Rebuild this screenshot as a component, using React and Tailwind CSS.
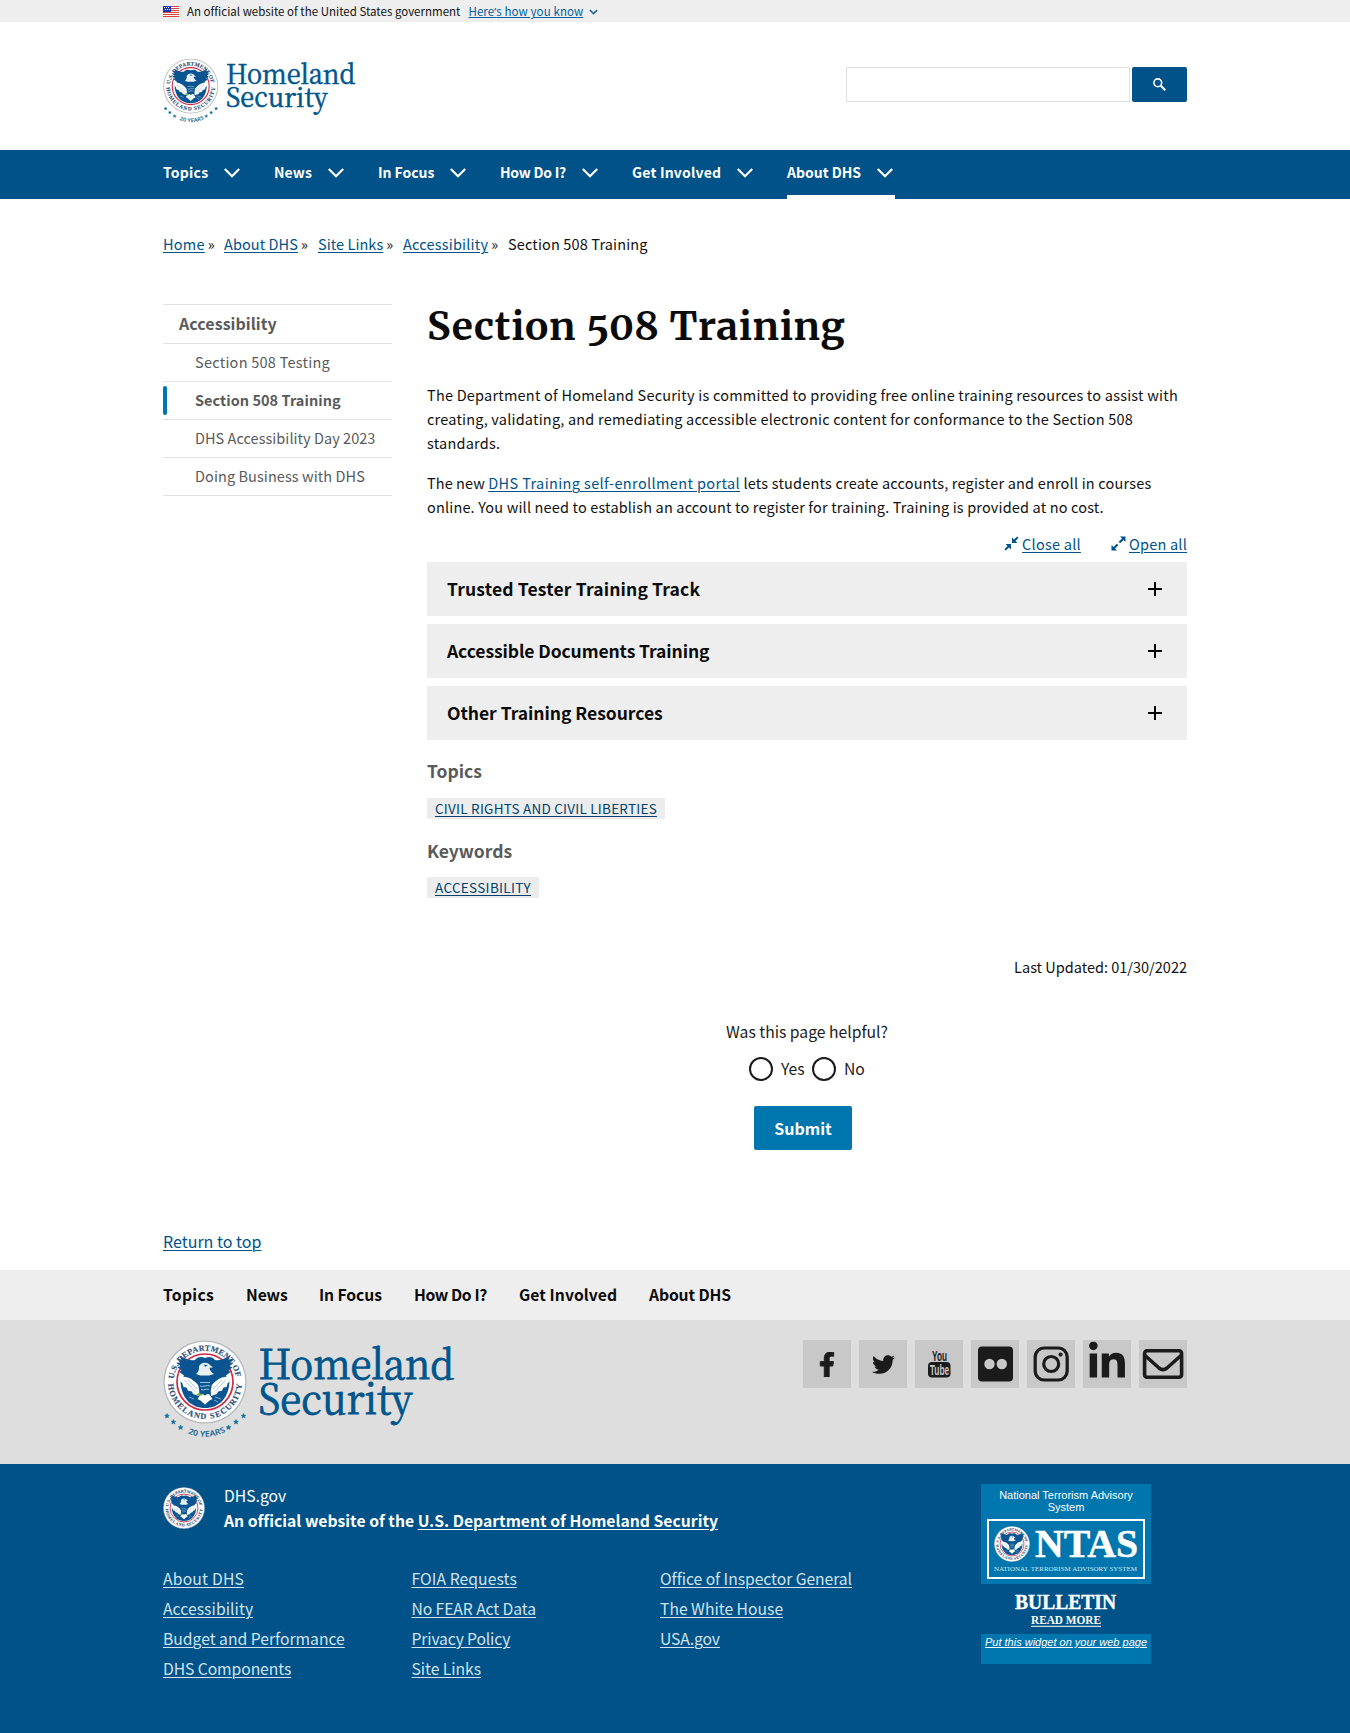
import React, { useId } from "react";
import { FaFacebookF, FaTwitter, FaLinkedinIn } from "react-icons/fa";

const link = "text-[#005288] underline decoration-1 underline-offset-2";

function SealArt() {
  const id = useId().replace(/[^a-zA-Z0-9]/g, "");
  return (
    <g>
      <defs>
        <path id={`${id}t`} d="M10.8 42A31.2 31.2 0 0 1 73.2 42" />
        <path id={`${id}b`} d="M5 42A37 37 0 0 0 79 42" />
      </defs>
      <circle cx="42" cy="42" r="41.600" fill="#b4b8be" />
      <circle cx="42" cy="42" r="40.300" fill="#fff" />
      <circle cx="42" cy="42" r="28" fill="#fff" stroke="#cf2a45" strokeWidth="1.700" />
      {/* field */}
      <path d="M17.500 39.500C17.500 58 28 68 42 68s24.500-10 24.500-28.500L58 30H26z" fill="#0a5591" />
      {/* upper wings */}
      <path d="M42 18c-4-1.800-8-1-10 2-4 1-9-1-15.500-4.500l2 4-4.500-.8 3.300 3.800-4.300.2 4.500 3.300-3 1.500 4 2.500-2 2L21 35.500l5 5 8 3h16l8-3 5-5 4.500-3.500-2-2 4-2.500-3-1.500 4.500-3.300-4.300-.2L70 18.700l-4.500.8 2-4C61 19 56 21 52 20c-2-3-6-3.800-10-2z" fill="#0a5591" />
      {/* white wing bands */}
      <path d="M15.500 33.500c2.500 2.200 5.500 3.500 9.500 4 4.500 1.500 8.500 5 11.500 9.500l-.5 9-6-2-1-2.500-4-.8-1.200-3-3.600-1-.8-3.400-2.800-2.500 1-2.300z" fill="#fff" />
      <path d="M68.500 33.500c-2.500 2.200-5.500 3.500-9.500 4-4.500 1.500-8.500 5-11.500 9.500l.5 9 6-2 1-2.500 4-.8 1.200-3 3.600-1 .8-3.400 2.800-2.500-1-2.300z" fill="#fff" />
      <path d="M21 39.500l11 12M25 39.500l9 10M63 39.500l-11 12M59 39.500l-9 10" stroke="#8db4d0" strokeWidth=".7" fill="none" />
      {/* tail */}
      <path d="M38 54h8l3.500 5-3 1.500L42 64.500 37.500 60.500 34.500 59z" fill="#fff" />
      {/* head */}
      <path d="M36 26.500c1.500-4 8-5 11-1.500l3 2.500-3.500.3c.3 2.800 2 4.500 4.500 6.200l-5 1.500h-9l-4-1.500c2.300-1.700 3.200-4 3-7.500z" fill="#e8f0f6" />
      <path d="M41 24.500l4 .8-3 1.500z" fill="#0a5591" />
      {/* shield */}
      <path d="M35.500 37h13v9c0 4.500-3 7.500-6.500 9.500-3.500-2-6.500-5-6.500-9.500z" fill="#0a5591" />
      <path d="M37 42.500h10M37 46c3 1.800 7-1.800 10 0M38 49.500c3 1.500 5-1.500 8 0" stroke="#9cc4de" strokeWidth="1" fill="none" />
      <path d="M33 54c3-1.500 5-1 7 1-2.500 1.300-5 1-7-1z" fill="#6fae4b" />
      <path d="M52 57l6 2M51 60l4 2M26 57l5 2" stroke="#9cc4de" strokeWidth=".8" />
      <g fill="#2c4f78" stroke="#2c4f78" strokeWidth=".15" className="font-['Liberation_Serif',serif] font-bold" fontSize="8.200">
        <text textLength="90" lengthAdjust="spacing"><textPath href={`#${id}t`} startOffset="3">U.S. DEPARTMENT OF</textPath></text>
        <text textLength="112" lengthAdjust="spacing"><textPath href={`#${id}b`} startOffset="2">HOMELAND SECURITY</textPath></text>
      </g>
    </g>
  );
}

const STARS = [[4, 76], [10.4, 82], [17.600, 87.500], [65.500, 87.500], [73, 82], [80.500, 76]];

function Logo({ className }) {
  const id = useId().replace(/[^a-zA-Z0-9]/g, "");
  return (
    <svg viewBox="0 0 294 98" className={`overflow-visible ${className}`} aria-label="Homeland Security">
      <SealArt />
      <defs><path id={id} d="M10 85Q42 108.500 74 85" /></defs>
      {STARS.map(([x, y]) => (
        <path key={x} d="M0-2.500.7-.8 2.400-.8 1.100.3 1.500 2 0 1-1.500 2-1.100.3-2.400-.8-.7-.8z" fill="#0a6a9a" stroke="#0a6a9a" strokeWidth=".5" transform={`translate(${x} ${y})`} />
      ))}
      <text className="font-['Noto_Sans',sans-serif] font-semibold" fontSize="8" fill="#1c6b96" textLength="39" lengthAdjust="spacingAndGlyphs">
        <textPath href={`#${id}`} startOffset="17">20 YEARS</textPath>
      </text>
      <g fill="#00558c" stroke="#00558c" strokeWidth=".9" className="font-['Noto_Serif_CJK_SC','Liberation_Serif',serif]" fontSize="41">
        <text x="95.500" y="38.600" textLength="196" lengthAdjust="spacingAndGlyphs">Homeland</text>
        <text x="95.500" y="73.600" textLength="154" lengthAdjust="spacingAndGlyphs">Security</text>
      </g>
    </svg>
  );
}

function Seal({ className }) {
  return <svg viewBox="0 0 84 84" className={`overflow-visible ${className}`}><SealArt /></svg>;
}

const NAV = [
  ["Topics", "w-[79px]", "tracking-[0.250px]"],
  ["News", "w-[72px]", "tracking-[0.100px]"],
  ["In Focus", "w-[90px]", "tracking-[-0.050px]"],
  ["How Do I?", "w-[100px]", "tracking-[-0.250px]"],
  ["Get Involved", "w-[123px]", "tracking-[0.200px]"],
  ["About DHS", "w-[108px]", "tracking-[0px]"],
];

function Header() {
  return (
    <>
      <div className="h-[22px] bg-[#eee]">
        <div className="mx-auto flex h-full w-[1024px] items-center text-[11.500px]">
          <svg viewBox="0 0 16 11" className="mt-px h-[11px] w-4" shapeRendering="crispEdges">
            <rect width="16" height="11" fill="#fff" />
            <path d="M0 .5h16M0 2.500h16M0 4.500h16M0 6.500h16M0 8.500h16M0 10.500h16" stroke="#d8433b" />
            <rect width="8" height="6" fill="#1e33b1" />
            <path d="M1 1.500h1M3 1.500h1M5 1.500h1M2 3.500h1M4 3.500h1M6 3.500h1" stroke="#fff" />
          </svg>
          <span className="ml-2 mt-[2px] tracking-[0.010px]">An official website of the United States government</span>
          <a className="ml-2 mt-[2px] text-[11.500px] tracking-[0.100px] text-[#005ea2] underline decoration-1 underline-offset-1">Here<span className="font-['Noto_Sans',sans-serif] text-[11px]">’</span>s how you know</a>
          <svg viewBox="0 0 10 6" className="ml-[6px] mt-[2px] h-[6px] w-[9px]"><path d="M1 1l4 3.700L9 1" fill="none" stroke="#1b6a9c" strokeWidth="1.800" /></svg>
        </div>
      </div>
      <div className="h-32">
        <div className="mx-auto flex w-[1024px] items-start justify-between">
          <Logo className="mt-[36px] h-[65.500px] w-[194px]" />
          <div className="mt-[45px] flex gap-[2px]">
            <div className="h-[35px] w-[284px] border border-[#dfdfdf]" />
            <button className="flex h-[35px] w-[55px] items-center justify-center rounded-[2px] bg-[#005288]">
              <svg viewBox="0 0 13 13" className="h-[13px] w-[13px]" fill="none" stroke="#fff"><circle cx="4.800" cy="4.800" r="3.900" strokeWidth="1.600" /><path d="M7.800 7.800l4.500 4.500" strokeWidth="2" /></svg>
            </button>
          </div>
        </div>
      </div>
      <nav className="h-[49px] bg-[#005288]">
        <div className="mx-auto flex h-full w-[1024px] gap-8">
          {NAV.map(([t, w, tr], i) => (
            <div key={t} className={`flex items-start justify-between border-b-4 pr-[2px] ${w} ${i === 5 ? "border-white" : "border-transparent"}`}>
              <span className={`mt-[12px] whitespace-nowrap text-[14px] font-bold leading-[20px] text-white ${tr}`}>{t}</span>
              <svg viewBox="0 0 16 10" className="mt-[18px] h-[10px] w-4 shrink-0"><path d="M.8 1L8 8.200 15.200 1" fill="none" stroke="#fff" strokeWidth="2.200" /></svg>
            </div>
          ))}
        </div>
      </nav>
    </>
  );
}

function Crumbs() {
  const items = [["Home", "w-[61px]", "tracking-[0.250px]"], ["About DHS", "w-[94px]", "tracking-[0.080px]"], ["Site Links", "w-[85px]", "tracking-[0.060px]"], ["Accessibility", "w-[105px]", "tracking-[0.200px]"]];
  return (
    <div className="mx-auto mt-[33px] flex h-6 w-[1024px] whitespace-nowrap text-[14.500px] leading-6">
      {items.map(([t, w, tr]) => (
        <div key={t} className={w}><a className={`${link} ${tr}`}>{t}</a><span className="ml-[3px]">»</span></div>
      ))}
      <span className="tracking-[0.140px]">Section 508 Training</span>
    </div>
  );
}

function SideNav() {
  const items = [["Section 508 Testing", "tracking-[0.250px]"], ["Section 508 Training", "tracking-[0.040px]"], ["DHS Accessibility Day 2023", "tracking-[0.040px]"], ["Doing Business with DHS", "tracking-[0.080px]"]];
  return (
    <aside className="mt-[8px] h-[192px] w-[229px] text-[14.500px] text-[#5a5a5a]">
      <div className="flex h-[39px] items-center border-t border-[#e3e3e3] pb-[2px] pl-4 text-[16px] font-bold"><span className="tracking-[0.050px]">Accessibility</span></div>
      {items.map(([t, tr], i) => (
        <div key={t} className={`flex h-[38px] items-center border-t border-[#e3e3e3] ${i === 3 ? "border-b !h-[39px]" : ""} ${i === 1 ? "font-bold" : ""}`}>
          <span className={`mr-7 h-[29px] w-1 rounded-full ${i === 1 ? "bg-[#0076ae]" : ""}`} />
          <span className={`pb-[2px] ${tr}`}>{t}</span>
        </div>
      ))}
    </aside>
  );
}

const tag = "text-[13.500px] leading-[21px] text-[#003f6e] underline decoration-1 underline-offset-2";

function Main() {
  const acc = [["Trusted Tester Training Track", "tracking-[0.160px]"], ["Accessible Documents Training", "tracking-[-0.100px]"], ["Other Training Resources", "tracking-[-0.030px]"]];
  return (
    <main className="w-[760px]">
      <h1 className="mt-[3px] h-[56px] whitespace-nowrap font-['Merriweather','DejaVu_Serif',serif] text-[39px] font-bold leading-[56px] tracking-[0.660px] text-[#0b0b0b] [font-variant-numeric:oldstyle-nums]">Section 508 Training</h1>
      <div className="mt-[28px] whitespace-nowrap text-[14.500px] leading-6">
        <p>
          <span className="tracking-[0.215px]">The Department of Homeland Security is committed to providing free online training resources to assist with</span><br />
          <span className="tracking-[0.200px]">creating, validating, and remediating accessible electronic content for conformance to the Section 508</span><br />
          <span className="tracking-[0.215px]">standards.</span>
        </p>
        <p className="mt-4">
          <span className="tracking-[0.080px]">The new </span><a className={`${link} tracking-[0.380px]`}>DHS Training self-enrollment portal</a><span className="tracking-[0.190px]"> lets students create accounts, register and enroll in courses</span><br />
          <span className="tracking-[0.160px]">online. You will need to establish an account to register for training. Training is provided at no cost.</span>
        </p>
      </div>
      <div className="mt-[13px] flex h-6 justify-end text-[14.500px] leading-6">
        <svg viewBox="0 0 15 15" className="mr-[3px] mt-1 h-[15px] w-[15px]" fill="#005288"><path d="M8 7V1.500l2 2L13.200.5l1.300 1.300-3 3.200 2 2zM7 8v5.500l-2-2-3.200 3-1.300-1.300 3-3.200-2-2z" /></svg>
        <a className={`${link} tracking-[0.250px]`}>Close all</a>
        <svg viewBox="0 0 15 15" className="ml-[30px] mr-[3px] mt-1 h-[15px] w-[15px]" fill="#005288"><path d="M9 .5h5.500V6l-2-2-3.300 3.300L7.700 5.800 11 2.500zM.5 9v5.500H6l-2-2 3.300-3.300-1.500-1.500L2.500 11z" /></svg>
        <a className={`${link} tracking-[0.220px]`}>Open all</a>
      </div>
      <div className="mt-[6px] flex flex-col gap-2">
        {acc.map(([t, tr]) => (
          <div key={t} className="flex h-[54px] items-center justify-between bg-[#eee] pl-5 pr-[25px] text-[17.500px] font-bold leading-6 text-[#0b0b0b]">
            <span className={tr}>{t}</span>
            <svg viewBox="0 0 14 14" className="h-[14px] w-[14px]"><path d="M7 0v14M0 7h14" stroke="#000" strokeWidth="2" /></svg>
          </div>
        ))}
      </div>
      <h2 className="mt-[16px] h-[30px] text-[17.500px] font-bold leading-[30px] text-[#5a5a5a]">Topics</h2>
      <div className="mt-[12px] flex"><span className="flex h-[21px] items-center bg-[#ececec] px-2"><a className={`${tag} tracking-[0.240px]`}>CIVIL RIGHTS AND CIVIL LIBERTIES</a></span></div>
      <h2 className="mt-[17px] h-[30px] text-[17.500px] font-bold leading-[30px] text-[#5a5a5a]">Keywords</h2>
      <div className="mt-[11px] flex"><span className="flex h-[21px] items-center bg-[#ececec] px-2"><a className={`${tag} tracking-[0.320px]`}>ACCESSIBILITY</a></span></div>
      <div className="mt-[57px] h-6 text-right text-[14.500px] leading-6">Last Updated: 01/30/2022</div>
      <div className="mt-[41px] h-6 text-center text-[15.700px] leading-6 text-[#1b1b1b]">Was this page helpful?</div>
      <div className="mt-[13px] flex h-6 pl-[322px] text-[15.700px] leading-6 text-[#1b1b1b]">
        <span className="h-6 w-6 rounded-full border-2 border-[#1b1b1b]" /><span className="ml-2 w-[31px]">Yes</span>
        <span className="h-6 w-6 rounded-full border-2 border-[#1b1b1b]" /><span className="ml-2">No</span>
      </div>
      <button className="ml-[327px] mt-[25px] block h-11 w-[98px] rounded-[2px] bg-[#0076ae] pb-px text-[16px] font-bold leading-[42px] text-white">Submit</button>
    </main>
  );
}

function Box({ children }) {
  return <div className="flex h-12 w-12 items-center justify-center bg-[#c8c8c8] text-[#1b1b1b]">{children}</div>;
}

function Social() {
  return (
    <div className="mt-5 flex gap-2">
      <Box><FaFacebookF className="h-[25px] w-[16px]" stroke="#1b1b1b" strokeWidth="18" /></Box>
      <Box><FaTwitter className="h-[23px] w-[23px]" /></Box>
      <Box>
        <svg viewBox="0 0 48 48" className="h-12 w-12">
          <rect x="13" y="22" width="22.500" height="15.500" rx="4" fill="#1b1b1b" />
          <g className="font-['Liberation_Sans',sans-serif] font-bold">
            <text x="17" y="20.700" fontSize="15" fill="#1b1b1b" textLength="15" lengthAdjust="spacingAndGlyphs">You</text>
            <text x="14.800" y="35.300" fontSize="15" fill="#c8c8c8" textLength="19.500" lengthAdjust="spacingAndGlyphs">Tube</text>
          </g>
        </svg>
      </Box>
      <Box><svg viewBox="0 0 48 48" className="h-12 w-12"><rect x="7" y="6.500" width="35" height="35" rx="4" fill="#1b1b1b" /><circle cx="18.500" cy="24" r="5.200" fill="#c8c8c8" /><circle cx="30.800" cy="24" r="5.200" fill="#c8c8c8" /></svg></Box>
      <Box><svg viewBox="0 0 48 48" className="h-12 w-12" fill="none" stroke="#1b1b1b" strokeWidth="3.200"><rect x="8.200" y="8" width="32" height="32" rx="9" /><circle cx="24.200" cy="24" r="7.500" /><circle cx="33.600" cy="14.600" r="2.100" fill="#1b1b1b" stroke="none" /></svg></Box>
      <Box><FaLinkedinIn className="h-[41px] w-[36px] -translate-y-[2.500px]" /></Box>
      <Box><svg viewBox="0 0 48 48" className="h-12 w-12" fill="none" stroke="#1b1b1b" strokeWidth="3.600"><rect x="5.600" y="10.800" width="37" height="26.500" rx="2.500" /><path d="M6 15.500L20 28q4 3.300 8 0L42 15.500" /></svg></Box>
    </div>
  );
}

function Ntas() {
  return (
    <div className="mr-9 mt-5 w-[170px] text-center">
      <div className="h-[100px] bg-[#0076ae] px-[6px] pt-[5px] font-['Liberation_Sans',sans-serif] text-[11px] leading-[12px] text-white">
        <div>National Terrorism Advisory<br />System</div>
        <div className="mt-[6px] h-[60px] w-[158px] border-2 border-white">
          <div className="mt-[5px] flex items-center pl-[5px]">
            <Seal className="h-9 w-9 shrink-0" />
            <svg viewBox="0 0 104 34" className="ml-[5px] h-[34px] w-[104px] overflow-visible"><text x="0" y="30" fill="#fff" stroke="#fff" strokeWidth=".5" fontSize="41" textLength="103" lengthAdjust="spacingAndGlyphs" className="font-['Liberation_Serif',serif] font-bold">NTAS</text></svg>
          </div>
          <svg viewBox="0 0 144 8" className="ml-[5px] mt-[2px] h-2 w-36 overflow-visible"><text x="0" y="6.500" fill="#cfe6f3" fontSize="7" textLength="143" lengthAdjust="spacingAndGlyphs" className="font-['Liberation_Serif',serif]">NATIONAL TERRORISM ADVISORY SYSTEM</text></svg>
        </div>
      </div>
      <div className="flex h-[50px] flex-col items-center font-['Liberation_Serif',serif] text-white">
        <svg viewBox="0 0 102 17" className="mt-[10px] h-[17px] w-[102px] overflow-visible"><text x="0" y="14.700" fill="#fff" stroke="#fff" strokeWidth=".4" fontSize="21" textLength="101" lengthAdjust="spacingAndGlyphs" className="font-semibold">BULLETIN</text></svg>
        <svg viewBox="0 0 72 16" className="h-4 w-[72px] overflow-visible"><text x="1" y="13" fill="#fff" fontSize="12.500" textLength="70" lengthAdjust="spacingAndGlyphs" className="font-bold">READ MORE</text><path d="M1 15.300h70" stroke="#fff" /></svg>
      </div>
      <div className="h-[30px] bg-[#0076ae] pt-[2px] font-['Liberation_Sans',sans-serif] text-[11px] italic leading-[12px] text-white underline">Put this widget on your web page</div>
    </div>
  );
}

function Footer() {
  const nav = [["Topics", "w-[83px]", "tracking-[0.300px]"], ["News", "w-[73px]", "tracking-[-0.100px]"], ["In Focus", "w-[95px]", "tracking-[-0.080px]"], ["How Do I?", "w-[105px]", "tracking-[-0.400px]"], ["Get Involved", "w-[130px]", "tracking-[0.060px]"], ["About DHS", "", "tracking-[-0.120px]"]];
  const cols = [
    [["About DHS", "tracking-[0.200px]"], ["Accessibility", "tracking-[0.060px]"], ["Budget and Performance", ""], ["DHS Components", "tracking-[-0.080px]"]],
    [["FOIA Requests", "tracking-[0.080px]"], ["No FEAR Act Data", "tracking-[-0.080px]"], ["Privacy Policy", "tracking-[-0.150px]"], ["Site Links", "tracking-[-0.050px]"]],
    [["Office of Inspector General", "tracking-[-0.050px]"], ["The White House", ""], ["USA.gov", "tracking-[-0.100px]"]],
  ];
  return (
    <footer>
      <div className="h-[50px] bg-[#eee]">
        <div className="mx-auto flex w-[1024px] pt-[13px] text-[15.700px] font-bold leading-6 text-[#0b0b0b]">
          {nav.map(([t, w, tr]) => <a key={t} className={`${w} ${tr} whitespace-nowrap`}>{t}</a>)}
        </div>
      </div>
      <div className="h-36 bg-[#dedede]">
        <div className="mx-auto flex w-[1024px] justify-between">
          <Logo className="mt-5 h-[98px] w-[294px]" />
          <Social />
        </div>
      </div>
      <div className="h-[269px] bg-[#005288]">
        <div className="mx-auto flex w-[1024px] justify-between text-[15.700px] leading-[25px] text-white">
          <div>
            <div className="mt-[19px] flex">
              <Seal className="mt-1 h-[42px] w-[42px]" />
              <div className="ml-[19px]">
                <div>DHS.gov</div>
                <div className="whitespace-nowrap font-bold tracking-[0.020px]">An official website of the <a className="underline decoration-1 underline-offset-2">U.S. Department of Homeland Security</a></div>
              </div>
            </div>
            <div className="mt-[31px] flex leading-[30px] text-[#d0e4f2]">
              {cols.map((c) => (
                <div key={c[0][0]} className="w-[248.500px]">
                  {c.map(([t, tr]) => <div key={t}><a className={`underline decoration-1 underline-offset-2 ${tr}`}>{t}</a></div>)}
                </div>
              ))}
            </div>
          </div>
          <Ntas />
        </div>
      </div>
    </footer>
  );
}

export default function App() {
  return (
    <div className="h-[1733px] w-[1350px] overflow-hidden bg-white font-['Noto_Sans_CJK_SC','Noto_Sans',sans-serif] text-[#111]">
      <Header />
      <Crumbs />
      <div className="mx-auto mt-[40px] flex w-[1024px] justify-between">
        <SideNav />
        <Main />
      </div>
      <div className="mx-auto mt-[79px] h-[41px] w-[1024px] text-[16px] leading-6"><a className={link}>Return to top</a></div>
      <Footer />
    </div>
  );
}
